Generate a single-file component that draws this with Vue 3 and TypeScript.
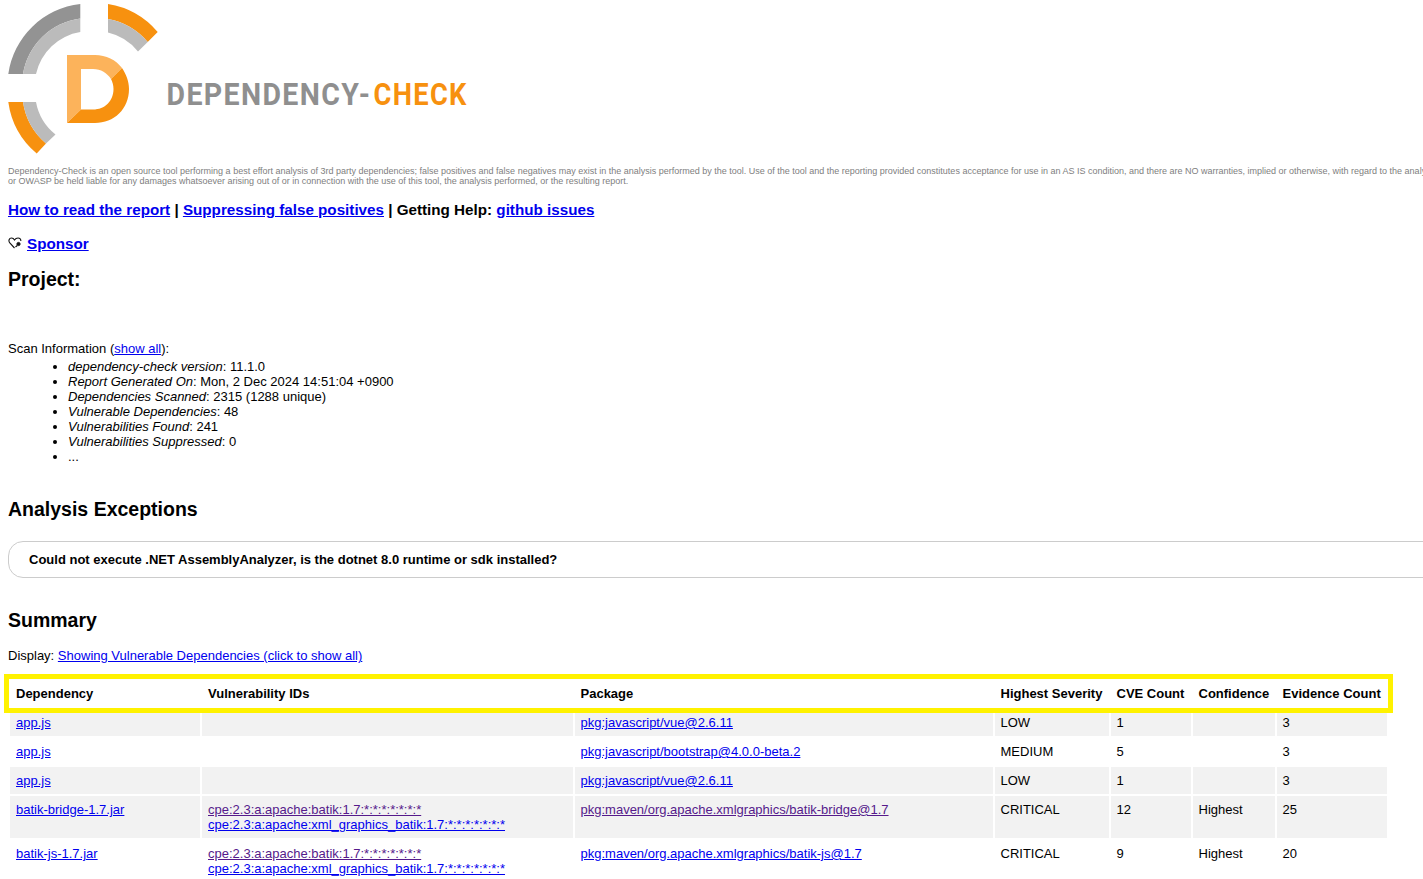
<script setup lang="ts">
interface Row {
  dep: string
  ids: { text: string; seen?: boolean }[]
  pkg: string
  seen?: boolean
  sev: string
  cve: string
  conf: string
  ev: string
  shade: boolean
}
const stats: [string, string][] = [
  ['dependency-check version', '11.1.0'],
  ['Report Generated On', 'Mon, 2 Dec 2024 14:51:04 +0900'],
  ['Dependencies Scanned', '2315 (1288 unique)'],
  ['Vulnerable Dependencies', '48'],
  ['Vulnerabilities Found', '241'],
  ['Vulnerabilities Suppressed', '0'],
]
const batik = [
  { text: 'cpe:2.3:a:apache:batik:1.7:*:*:*:*:*:*:*', seen: true },
  { text: 'cpe:2.3:a:apache:xml_graphics_batik:1.7:*:*:*:*:*:*:*' },
]
const rows: Row[] = [
  { dep: 'app.js', ids: [], pkg: 'pkg:javascript/vue@2.6.11', sev: 'LOW', cve: '1', conf: '', ev: '3', shade: true },
  { dep: 'app.js', ids: [], pkg: 'pkg:javascript/bootstrap@4.0.0-beta.2', sev: 'MEDIUM', cve: '5', conf: '', ev: '3', shade: false },
  { dep: 'app.js', ids: [], pkg: 'pkg:javascript/vue@2.6.11', sev: 'LOW', cve: '1', conf: '', ev: '3', shade: true },
  { dep: 'batik-bridge-1.7.jar', ids: batik, pkg: 'pkg:maven/org.apache.xmlgraphics/batik-bridge@1.7', seen: true, sev: 'CRITICAL', cve: '12', conf: 'Highest', ev: '25', shade: true },
  { dep: 'batik-js-1.7.jar', ids: batik, pkg: 'pkg:maven/org.apache.xmlgraphics/batik-js@1.7', sev: 'CRITICAL', cve: '9', conf: 'Highest', ev: '20', shade: false },
]
</script>

<template>
  <div class="page">
    <svg class="logo" width="480" height="156" viewBox="0 0 480 156">
      <path fill="#939393" d="M8.3 74A82 82 0 0 1 80.3 4V18.5A67 67 0 0 0 23 74Z" />
      <path fill="#bbbbbb" d="M23 74A67 67 0 0 1 80.3 18.5V32A54 54 0 0 0 36 74Z" />
      <path fill="#f7910f" d="M108 4A82 82 0 0 1 157.7 32L147.7 42A68 68 0 0 0 108 19Z" />
      <path fill="#bbbbbb" d="M108 19A68 68 0 0 1 147.7 42L138 51.5A54 54 0 0 0 108 32.5Z" />
      <path fill="#f7910f" d="M8.3 102A82 82 0 0 0 36.7 153.5L46 143.5A68 68 0 0 1 23 102Z" />
      <path fill="#bbbbbb" d="M23 102A68 68 0 0 0 46 143.5L55.5 134.5A54 54 0 0 1 36 102Z" />
      <path fill="#fcb35b" d="M67 55H95C106 55 116 60 122 68L111 79C107 73 101 69 93 69H81V109.5L67 123Z" />
      <path fill="#f7910f" d="M122 68C126 74 129 81 129 89C129 109 114 123 95 123H67L81 109.5H93C105 109.5 113.500 101 113.500 89C113.500 85 112.500 82 111 79Z" />
      <text class="logo-text" transform="translate(166.5 105) scale(0.92 1)" fill="#8f8f8f">DEPENDENCY-</text>
      <text class="logo-text" transform="translate(373.5 105) scale(0.88 1)" fill="#f7910f">CHECK</text>
    </svg>

    <p class="disclaimer">
      Dependency-Check is an open source tool performing a best effort analysis of 3rd party dependencies; false positives and false negatives may exist in the analysis performed by the tool. Use of the tool and the reporting provided constitutes acceptance for use in an AS IS condition, and there are NO warranties, implied or otherwise, with regard to the analysis performed or the results produced, nor does the copyright holder<br />
      or OWASP be held liable for any damages whatsoever arising out of or in connection with the use of this tool, the analysis performed, or the resulting report.
    </p>

    <p class="help">
      <a href="#">How to read the report</a> | <a href="#">Suppressing false positives</a> | Getting Help: <a href="#">github issues</a>
    </p>

    <p class="help sponsor">
      <svg class="heart" width="14" height="14" viewBox="0 0 14 14" fill="none" stroke="#111" stroke-width="1.100">
        <path d="M6.500 12L1.800 7C.2 5 1 2 3.500 2 5 2 6 3 6.500 4 7.300 2.800 8.500 2 10 2 12 2 13 3.400 12.800 5" />
        <circle cx="10.500" cy="8" r="1.600" fill="#111" stroke-width="1" />
        <path d="M9.300 9.500L7.500 11" />
      </svg>
      <a href="#">Sponsor</a>
    </p>

    <h2 class="project">Project:</h2>

    <div class="scan">Scan Information (<a href="#">show all</a>):</div>
    <ul class="stats">
      <li v-for="s in stats" :key="s[0]"><i>{{ s[0] }}</i>: {{ s[1] }}</li>
      <li>...</li>
    </ul>

    <h2 class="exceptions">Analysis Exceptions</h2>
    <div class="exception-box">Could not execute .NET AssemblyAnalyzer, is the dotnet 8.0 runtime or sdk installed?</div>

    <h2 class="summary">Summary</h2>
    <div class="display">Display: <a href="#">Showing Vulnerable Dependencies (click to show all)</a></div>

    <table class="report">
      <colgroup>
        <col class="c1" /><col class="c2" /><col class="c3" /><col class="c4" /><col class="c5" /><col class="c6" /><col class="c7" />
      </colgroup>
      <thead>
        <tr>
          <th>Dependency</th>
          <th>Vulnerability IDs</th>
          <th>Package</th>
          <th>Highest Severity</th>
          <th>CVE Count</th>
          <th>Confidence</th>
          <th>Evidence Count</th>
        </tr>
      </thead>
      <tbody>
        <tr v-for="(r, i) in rows" :key="i" :class="{ shade: r.shade }">
          <td><a href="#">{{ r.dep }}</a></td>
          <td>
            <template v-for="(c, j) in r.ids" :key="j">
              <a href="#" :class="{ seen: c.seen }">{{ c.text }}</a><br />
            </template>
          </td>
          <td><a href="#" :class="{ seen: r.seen }">{{ r.pkg }}</a></td>
          <td>{{ r.sev }}</td>
          <td>{{ r.cve }}</td>
          <td>{{ r.conf }}</td>
          <td>{{ r.ev }}</td>
        </tr>
      </tbody>
    </table>
  </div>
</template>

<style>
html, body { overflow: hidden; background: #fff; }
</style>

<style scoped>
.page {
  width: 1700px;
  padding: 0 8px;
  box-sizing: border-box;
  font-family: "Liberation Sans", Arial, sans-serif;
  font-size: 13px;
  line-height: 15px;
  color: #000;
}
a { color: #0000ee; text-decoration: underline; }
a.seen { color: #551a8b; }
.logo { display: block; margin-left: -8px; }
.logo-text { font-family: Roboto, sans-serif; font-weight: 700; font-size: 31px; letter-spacing: 1.5px; }
.disclaimer {
  margin: 10px 0 0;
  font-size: 9px;
  line-height: 10px;
  color: #808080;
  white-space: nowrap;
}
.help {
  margin: 15px 0 0;
  font-size: 15.21px;
  line-height: 17px;
  font-weight: 700;
}
.sponsor { margin-top: 17px; }
.heart { vertical-align: -1px; margin-right: 5px; }
h2 { margin: 0; font-size: 19.5px; line-height: 23px; font-weight: 700; }
.project { margin-top: 16px; }
.scan { margin-top: 50px; }
.stats { margin: 3px 0 0; padding: 0 0 0 60px; }
.exceptions { margin-top: 34px; }
.exception-box {
  margin-top: 20px;
  padding: 10px 20px;
  border: 1px solid #ccc;
  border-radius: 15px;
  font-weight: 700;
}
.summary { margin-top: 31px; }
.display { margin-top: 16px; }
.report {
  margin-top: 15px;
  table-layout: fixed;
  width: 1381px;
  border-collapse: separate;
  border-spacing: 2px;
}
.c1 { width: 190px; }
.c2 { width: 370.5px; }
.c3 { width: 418px; }
.c4 { width: 114px; }
.c5 { width: 80px; }
.c6 { width: 82px; }
.c7 { width: 110.5px; }
th, td { padding: 6px; text-align: left; vertical-align: top; white-space: nowrap; }
th { font-weight: 700; }
thead tr { outline: 5px solid #fff200; outline-offset: 1px; }
.shade td { background: #f2f2f2; }
</style>
